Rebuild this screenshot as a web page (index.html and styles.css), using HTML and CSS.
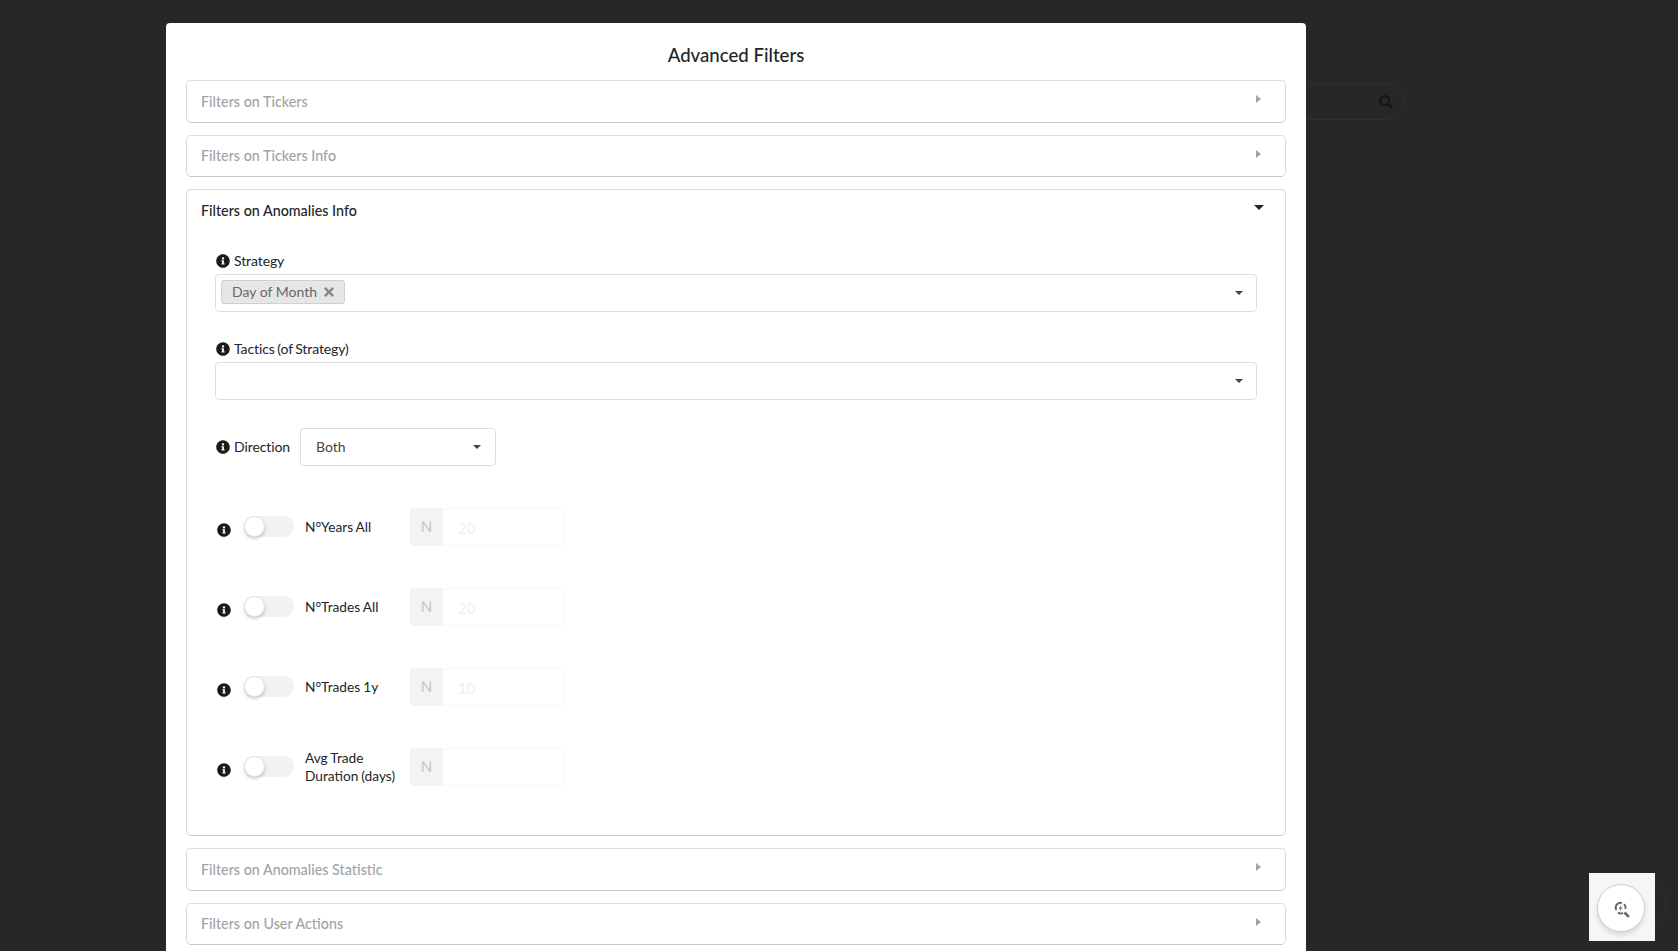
FILE: index.html
```html
<!DOCTYPE html>
<html lang="en">
<head>
  <meta charset="UTF-8" />
  <meta name="viewport" content="width=device-width, initial-scale=1.0"/>
  <title>Advanced Filters</title>
  <link rel="stylesheet" href="styles.css">
</head>
<body>
  <!-- page behind the backdrop -->
  <div class="behind-search">
    <svg class="icon" viewBox="0 0 512 512" width="14" height="14"><path d="M505 442.7L405.3 343c-4.5-4.5-10.6-7-17-7H372c27.6-35.3 44-79.7 44-128C416 93.1 322.9 0 208 0S0 93.1 0 208s93.1 208 208 208c48.3 0 92.7-16.4 128-44v16.3c0 6.4 2.5 12.5 7 17l99.7 99.7c9.4 9.4 24.6 9.4 33.9 0l28.3-28.3c9.4-9.4 9.4-24.6.1-34zM208 336c-70.7 0-128-57.2-128-128 0-70.7 57.2-128 128-128 70.7 0 128 57.2 128 128 0 70.7-57.2 128-128 128z"/></svg>
  </div>
  <div class="behind-arc"></div>

  <div class="modal">
    <h2 class="modal-title">Advanced Filters</h2>

    <div class="panel">
      <div class="panel-head"><span>Filters on Tickers</span><span class="caret-right"></span></div>
    </div>
    <div class="panel">
      <div class="panel-head"><span>Filters on Tickers Info</span><span class="caret-right"></span></div>
    </div>

    <div class="panel open">
      <div class="panel-head"><span>Filters on Anomalies Info</span><span class="caret-down"></span></div>
      <div class="panel-body">
        <div class="field">
          <div class="field-label">
            <svg class="info" viewBox="0 0 512 512"><path d="M256 8C119.043 8 8 119.083 8 256c0 136.997 111.043 248 248 248s248-111.003 248-248C504 119.083 392.957 8 256 8zm0 110c23.196 0 42 18.804 42 42s-18.804 42-42 42-42-18.804-42-42 18.804-42 42-42zm56 254c0 6.627-5.373 12-12 12h-88c-6.627 0-12-5.373-12-12v-24c0-6.627 5.373-12 12-12h12v-64h-12c-6.627 0-12-5.373-12-12v-24c0-6.627 5.373-12 12-12h64c6.627 0 12 5.373 12 12v100h12c6.627 0 12 5.373 12 12v24z"/></svg>
            Strategy
          </div>
          <div class="select">
            <span class="tag">Day of Month
              <svg class="tag-x" viewBox="0 0 352 512"><path d="M242.72 256l100.07-100.07c12.28-12.28 12.28-32.19 0-44.48l-22.24-22.24c-12.28-12.28-32.19-12.28-44.48 0L176 189.28 75.93 89.21c-12.28-12.28-32.19-12.28-44.48 0L9.21 111.45c-12.28 12.28-12.28 32.19 0 44.48L109.28 256 9.21 356.07c-12.28 12.28-12.28 32.19 0 44.48l22.24 22.24c12.28 12.28 32.2 12.28 44.48 0L176 322.72l100.07 100.07c12.28 12.28 32.2 12.28 44.48 0l22.24-22.24c12.28-12.28 12.28-32.19 0-44.48L242.72 256z"/></svg>
            </span>
            <span class="caret-small"></span>
          </div>
        </div>

        <div class="field">
          <div class="field-label">
            <svg class="info" viewBox="0 0 512 512"><path d="M256 8C119.043 8 8 119.083 8 256c0 136.997 111.043 248 248 248s248-111.003 248-248C504 119.083 392.957 8 256 8zm0 110c23.196 0 42 18.804 42 42s-18.804 42-42 42-42-18.804-42-42 18.804-42 42-42zm56 254c0 6.627-5.373 12-12 12h-88c-6.627 0-12-5.373-12-12v-24c0-6.627 5.373-12 12-12h12v-64h-12c-6.627 0-12-5.373-12-12v-24c0-6.627 5.373-12 12-12h64c6.627 0 12 5.373 12 12v100h12c6.627 0 12 5.373 12 12v24z"/></svg>
            Tactics (of Strategy)
          </div>
          <div class="select"><span class="caret-small"></span></div>
        </div>

        <div class="direction">
          <div class="field-label inline">
            <svg class="info" viewBox="0 0 512 512"><path d="M256 8C119.043 8 8 119.083 8 256c0 136.997 111.043 248 248 248s248-111.003 248-248C504 119.083 392.957 8 256 8zm0 110c23.196 0 42 18.804 42 42s-18.804 42-42 42-42-18.804-42-42 18.804-42 42-42zm56 254c0 6.627-5.373 12-12 12h-88c-6.627 0-12-5.373-12-12v-24c0-6.627 5.373-12 12-12h12v-64h-12c-6.627 0-12-5.373-12-12v-24c0-6.627 5.373-12 12-12h64c6.627 0 12 5.373 12 12v100h12c6.627 0 12 5.373 12 12v24z"/></svg>
            Direction
          </div>
          <div class="dropdown"><span>Both</span><span class="caret-small"></span></div>
        </div>

        <div class="toggle-row">
          <svg class="info" viewBox="0 0 512 512"><path d="M256 8C119.043 8 8 119.083 8 256c0 136.997 111.043 248 248 248s248-111.003 248-248C504 119.083 392.957 8 256 8zm0 110c23.196 0 42 18.804 42 42s-18.804 42-42 42-42-18.804-42-42 18.804-42 42-42zm56 254c0 6.627-5.373 12-12 12h-88c-6.627 0-12-5.373-12-12v-24c0-6.627 5.373-12 12-12h12v-64h-12c-6.627 0-12-5.373-12-12v-24c0-6.627 5.373-12 12-12h64c6.627 0 12 5.373 12 12v100h12c6.627 0 12 5.373 12 12v24z"/></svg>
          <span class="toggle"><span class="knob"></span></span>
          <span class="toggle-label">N°Years All</span>
          <div class="input-group"><span class="addon">N</span><span class="value">20</span></div>
        </div>

        <div class="toggle-row">
          <svg class="info" viewBox="0 0 512 512"><path d="M256 8C119.043 8 8 119.083 8 256c0 136.997 111.043 248 248 248s248-111.003 248-248C504 119.083 392.957 8 256 8zm0 110c23.196 0 42 18.804 42 42s-18.804 42-42 42-42-18.804-42-42 18.804-42 42-42zm56 254c0 6.627-5.373 12-12 12h-88c-6.627 0-12-5.373-12-12v-24c0-6.627 5.373-12 12-12h12v-64h-12c-6.627 0-12-5.373-12-12v-24c0-6.627 5.373-12 12-12h64c6.627 0 12 5.373 12 12v100h12c6.627 0 12 5.373 12 12v24z"/></svg>
          <span class="toggle"><span class="knob"></span></span>
          <span class="toggle-label">N°Trades All</span>
          <div class="input-group"><span class="addon">N</span><span class="value">20</span></div>
        </div>

        <div class="toggle-row">
          <svg class="info" viewBox="0 0 512 512"><path d="M256 8C119.043 8 8 119.083 8 256c0 136.997 111.043 248 248 248s248-111.003 248-248C504 119.083 392.957 8 256 8zm0 110c23.196 0 42 18.804 42 42s-18.804 42-42 42-42-18.804-42-42 18.804-42 42-42zm56 254c0 6.627-5.373 12-12 12h-88c-6.627 0-12-5.373-12-12v-24c0-6.627 5.373-12 12-12h12v-64h-12c-6.627 0-12-5.373-12-12v-24c0-6.627 5.373-12 12-12h64c6.627 0 12 5.373 12 12v100h12c6.627 0 12 5.373 12 12v24z"/></svg>
          <span class="toggle"><span class="knob"></span></span>
          <span class="toggle-label">N°Trades 1y</span>
          <div class="input-group"><span class="addon">N</span><span class="value">10</span></div>
        </div>

        <div class="toggle-row">
          <svg class="info" viewBox="0 0 512 512"><path d="M256 8C119.043 8 8 119.083 8 256c0 136.997 111.043 248 248 248s248-111.003 248-248C504 119.083 392.957 8 256 8zm0 110c23.196 0 42 18.804 42 42s-18.804 42-42 42-42-18.804-42-42 18.804-42 42-42zm56 254c0 6.627-5.373 12-12 12h-88c-6.627 0-12-5.373-12-12v-24c0-6.627 5.373-12 12-12h12v-64h-12c-6.627 0-12-5.373-12-12v-24c0-6.627 5.373-12 12-12h64c6.627 0 12 5.373 12 12v100h12c6.627 0 12 5.373 12 12v24z"/></svg>
          <span class="toggle"><span class="knob"></span></span>
          <span class="toggle-label">Avg Trade Duration (days)</span>
          <div class="input-group"><span class="addon">N</span><span class="value"></span></div>
        </div>
      </div>
    </div>

    <div class="panel">
      <div class="panel-head"><span>Filters on Anomalies Statistic</span><span class="caret-right"></span></div>
    </div>
    <div class="panel">
      <div class="panel-head"><span>Filters on User Actions</span><span class="caret-right"></span></div>
    </div>
  </div>

  <div class="float-box">
    <div class="float-btn">
      <svg class="float-icon" viewBox="0 0 16 16" width="17" height="17"><path d="M3.1 8.6A4.6 4.6 0 0 1 8.4 1.9" fill="none" stroke="#666" stroke-width="1.7"/><path d="M9.5 11.2A4.6 4.6 0 0 1 4.6 10.9" fill="none" stroke="#666" stroke-width="1.7"/><path d="M10.3 2.9A4.6 4.6 0 0 1 11.6 7.6" fill="none" stroke="#666" stroke-width="1.7"/><path d="M10.8 10.8L15 15" stroke="#666" stroke-width="2.4" fill="none"/><path d="M7.9 3.4L5.3 7.2h2L6.2 10l2.9-3.9H7z" fill="#666"/></svg>
    </div>
  </div>
</body>
</html>
```

FILE: styles.css
```css
html, body {
  height: 100%;
}

body {
  margin: 0;
  background: #272727;
  font-family: Lato, "Open Sans", sans-serif;
  font-size: 14px;
  color: #212529;
  overflow: hidden;
}

.behind-search {
  position: absolute;
  left: 1280px;
  top: 83px;
  width: 124px;
  height: 37px;
  box-sizing: border-box;
  border: 1px solid #2f2f2f;
  border-left: 0;
  border-radius: 0 19px 19px 0;
  display: flex;
  align-items: center;
  justify-content: flex-end;
  padding-right: 10px;
}
.icon {
  fill: #161616;
}
.behind-arc {
  position: absolute;
  left: 1606px;
  top: 873px;
  width: 61px;
  height: 61px;
  box-sizing: border-box;
  border: 1px solid #303030;
  border-radius: 50%;
}

.modal {
  position: relative;
  width: 1140px;
  box-sizing: border-box;
  margin: 23px 0 0 166px;
  padding: 0 20px 60px;
  background: #fff;
  border-radius: 4px;
}
.modal-title {
  margin: 0;
  height: 57px;
  line-height: 64px;
  text-align: center;
  font-size: 18.6px;
  font-weight: 500;
  color: #212529;
}

.panel {
  border: 1px solid #dcdcdc;
  border-bottom-color: #c8c8c8;
  border-radius: 5px;
  margin-bottom: 12px;
}
.panel-head {
  display: flex;
  justify-content: space-between;
  align-items: center;
  height: 40.5px;
  padding: 0 24px 0 14px;
  color: #a3a3a3;
  font-size: 14.3px;
  font-weight: 500;
}
.panel.open .panel-head {
  color: #212529;
}
.caret-right {
  border-left: 5px solid #a3a3a3;
  border-top: 4.5px solid transparent;
  border-bottom: 4.5px solid transparent;
  margin-top: -4px;
}
.caret-down {
  border-top: 5px solid #212529;
  border-left: 5px solid transparent;
  border-right: 5px solid transparent;
  margin: -6px -3px 0 0;
}
.caret-small {
  border-top: 4px solid #444;
  border-left: 4px solid transparent;
  border-right: 4px solid transparent;
}

.panel-body {
  height: 604.5px;
  box-sizing: border-box;
  padding: 19px 28px 0 28px;
}
.field {
  margin-bottom: 25.5px;
}
.field-label {
  display: flex;
  align-items: center;
  gap: 4px;
  height: 22px;
  padding-left: 1px;
  margin-bottom: 2.5px;
  white-space: nowrap;
  letter-spacing: -0.1px;
  word-spacing: -1px;
}
.field-label.inline {
  margin: 0 10px 0 0;
}
.info {
  width: 14px;
  height: 14px;
  fill: #1b1b1b;
  flex: none;
}
.select {
  display: flex;
  align-items: center;
  justify-content: space-between;
  height: 38px;
  box-sizing: border-box;
  border: 1px solid #dedede;
  border-radius: 4px;
  padding: 0 13px 0 5px;
}
.select .caret-small:only-child {
  margin-left: auto;
}
.tag {
  display: flex;
  align-items: center;
  gap: 6.5px;
  height: 24px;
  box-sizing: border-box;
  padding: 0 10px 1px;
  margin-top: -2px;
  background: #e6e6e6;
  border: 1px solid #cfcfcf;
  border-radius: 3px;
  color: #666;
}
.tag-x {
  width: 10px;
  height: 14px;
  fill: #8a8a8a;
}

.direction {
  display: flex;
  align-items: center;
  height: 38px;
  margin: 27.5px 0 42px;
}
.dropdown {
  display: flex;
  align-items: center;
  justify-content: space-between;
  width: 196px;
  height: 38px;
  box-sizing: border-box;
  border: 1px solid #dedede;
  border-radius: 4px;
  padding: 0 14px 0 15px;
  color: #444;
}

.toggle-row {
  display: flex;
  align-items: center;
  height: 38px;
  margin-bottom: 42px;
  padding-left: 2px;
}
.toggle-row .info {
  margin-top: 6px;
}
.toggle {
  position: relative;
  display: block;
  width: 50px;
  height: 21px;
  margin-left: 13px;
  border-radius: 11px;
  background: #f1f1f1;
  flex: none;
}
.knob {
  position: absolute;
  left: 0;
  top: 0;
  width: 21px;
  height: 21px;
  box-sizing: border-box;
  border-radius: 50%;
  background: #fff;
  border: 1px solid #e0e0e0;
  box-shadow: 0 2px 3px rgba(0, 0, 0, 0.18);
}
.toggle-label {
  width: 100px;
  margin-left: 11px;
  color: #212529;
  font-size: 13.7px;
  line-height: 18px;
  word-spacing: -0.5px;
  flex: none;
}
.input-group {
  display: flex;
  width: 155px;
  height: 38px;
  margin-left: 5px;
  box-sizing: border-box;
  border: 1px solid #f5f5f5;
  border-radius: 4px;
  flex: none;
}
.addon {
  width: 33px;
  margin: -1px 0 -1px -1px;
  background: #f3f3f3;
  border-radius: 4px 0 0 4px;
  color: #c4c4c4;
  font-size: 15px;
  text-align: center;
  line-height: 36px;
}
.value {
  padding-left: 15px;
  color: #efefef;
  font-size: 15px;
  line-height: 38px;
}

.float-box {
  position: absolute;
  left: 1589px;
  top: 873px;
  width: 66px;
  height: 68px;
  background: #f6f6f6;
}
.float-btn {
  position: absolute;
  left: 8px;
  top: 11px;
  width: 48px;
  height: 48px;
  box-sizing: border-box;
  display: flex;
  align-items: center;
  justify-content: center;
  background: #fff;
  border: 1px solid #d0d0d0;
  border-radius: 50%;
  box-shadow: 0 3px 5px rgba(0, 0, 0, 0.12);
}
.float-icon {
  margin: 3px 0 0 1px;
}
```
